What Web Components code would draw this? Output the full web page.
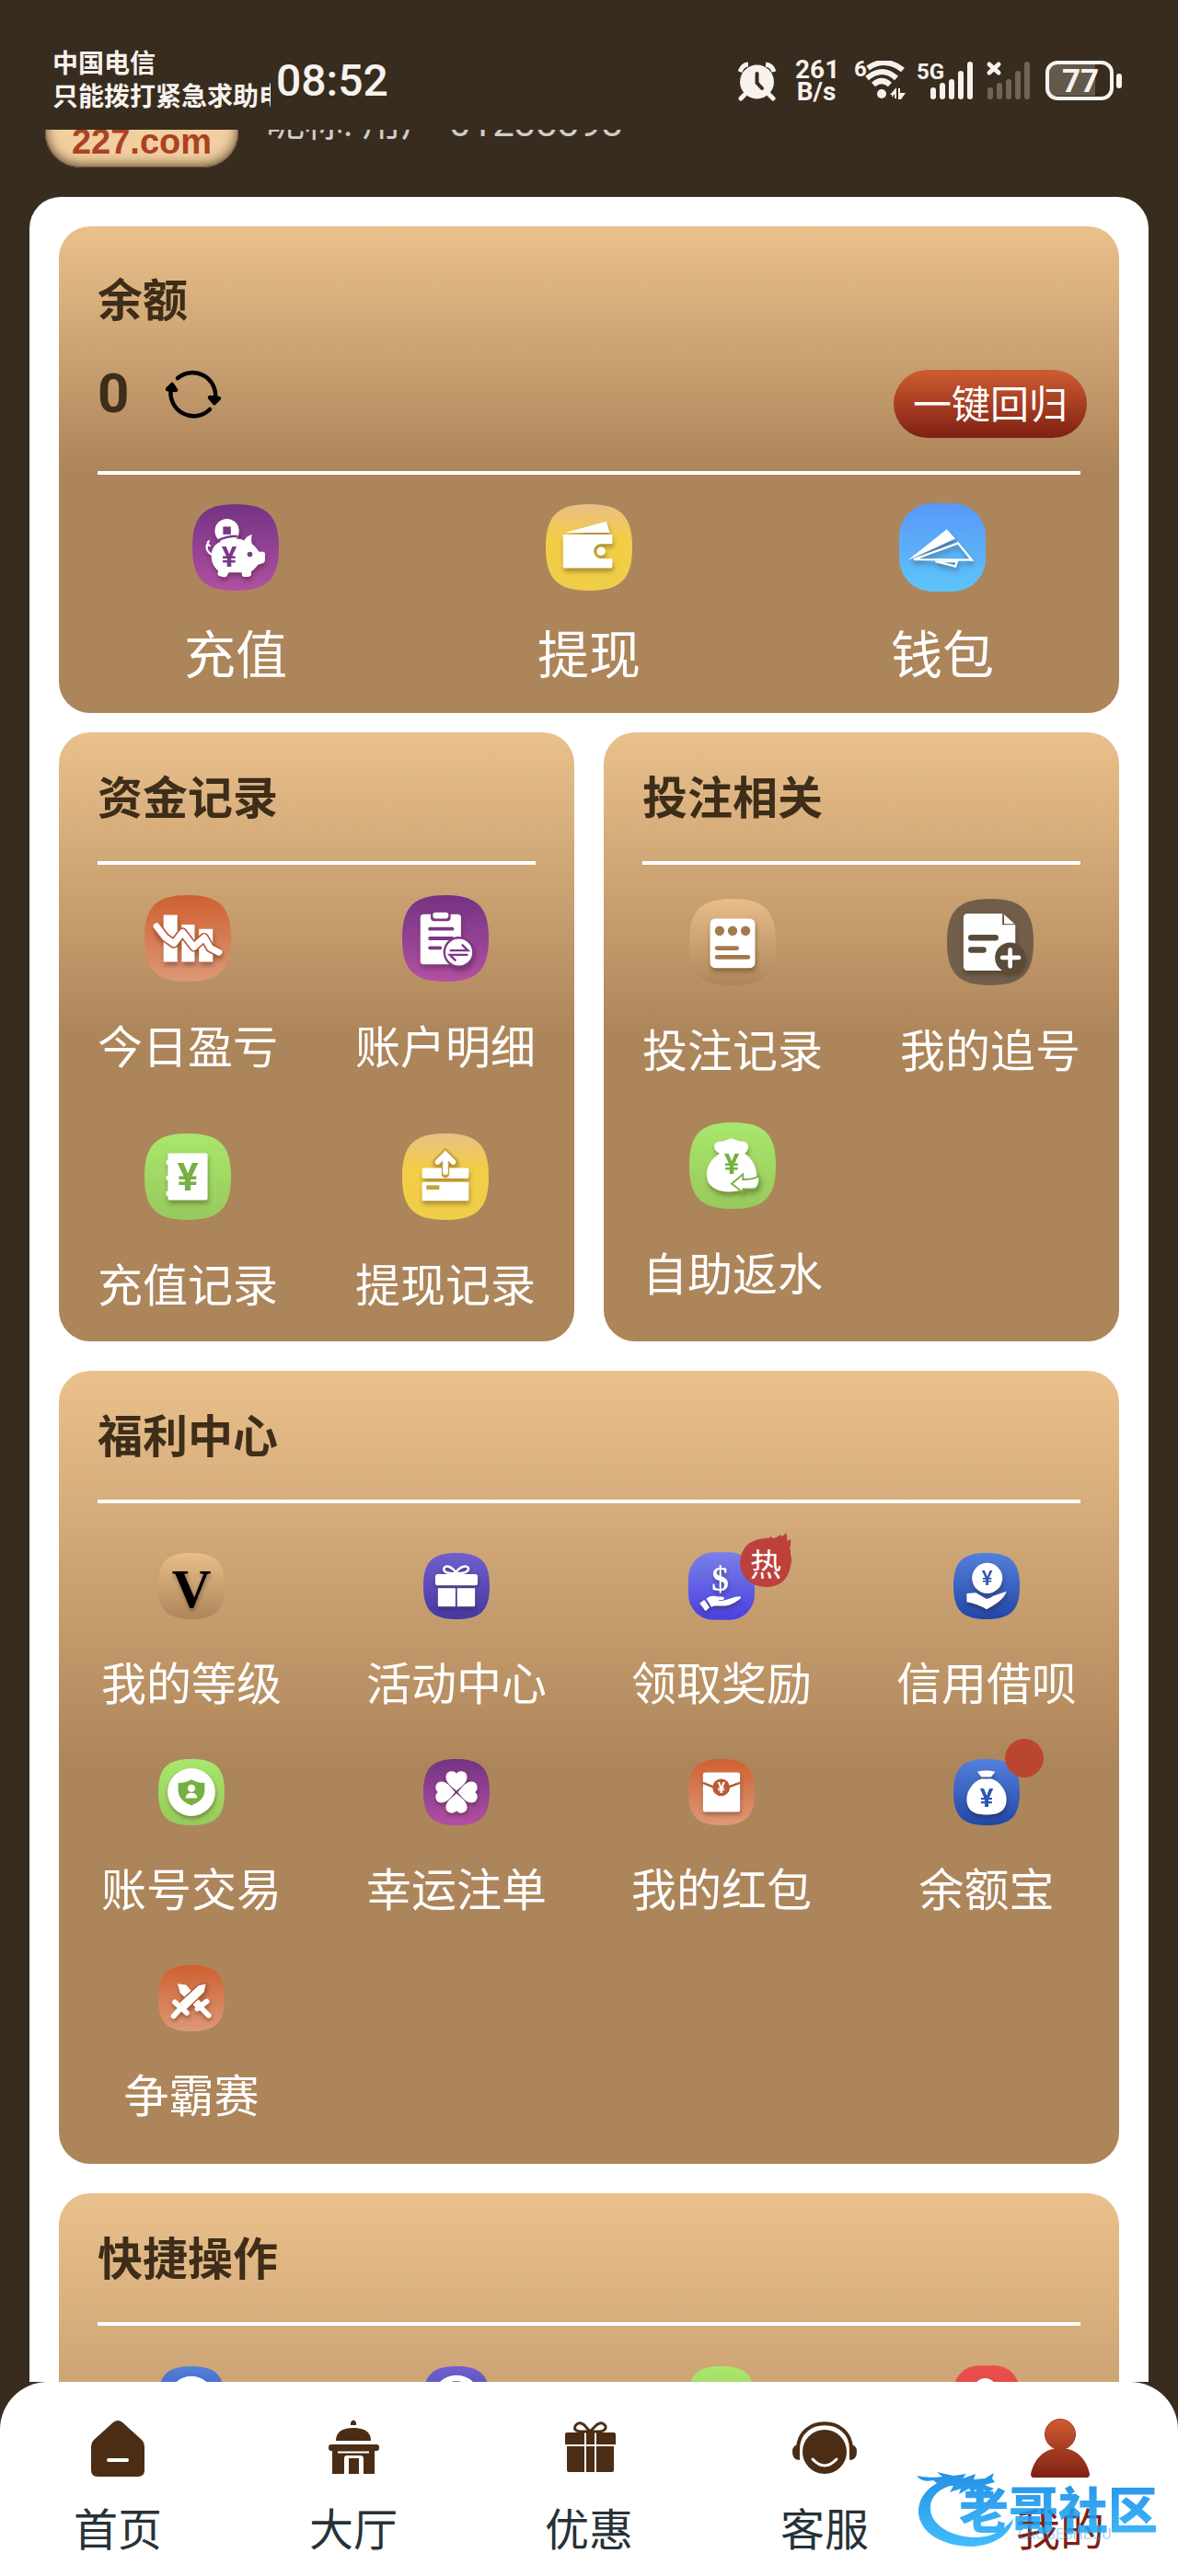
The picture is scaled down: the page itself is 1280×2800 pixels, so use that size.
<!DOCTYPE html>
<html lang="zh-CN">
<head>
<meta charset="utf-8">
<meta name="viewport" content="width=device-width, initial-scale=1">
<title>我的</title>
<style>
    body {
        margin: 0;
        background: #382c1e;
        font-family: Roboto, "Noto Sans CJK SC", sans-serif;
    }
</style>
</head>
<body>
<member-app></member-app>

<script>
// Glyphs are drawn on a 100x100 grid, var(--ink) is the colour of cut-outs
const glyphs = {
    piggy: `
        <circle cx="40" cy="31" r="14"/>
        <rect x="35.500" y="26" width="9" height="9" fill="var(--ink)"/>
        <path d="M20 48 Q16 46 19 43 M22 58 Q15 54 17 47" fill="none" stroke="#fff" stroke-width="2.500" stroke-linecap="round"/>
        <path d="M22 60 C22 46 34 40 50 40 C54 40 57 41 60 42 C62 38 65 36 69 35 C68 39 68 43 69 46 C73 49 75 52 77 55 L82 55 Q84 55 84 58 V65 Q84 67 82 68 L76 70 C74 73 71 76 68 78 V82 Q67 84 64 84 H60 Q57 84 57 79 H42 L40 83 Q39 85 35 84 L31 83 Q28 82 30 77 C25 73 22 67 22 60Z"/>
        <path d="M28 43 Q38 37 52 37" fill="none" stroke="var(--ink)" stroke-width="2.500"/>
        <circle cx="66.500" cy="58" r="3" fill="var(--ink)"/>
        <text x="42.500" y="72" font-size="33" fill="var(--ink)">¥</text>`,
    wallet: `
        <path d="M22 33 L70 20 L74 33Z"/>
        <path d="M20 35 H77 V46 H64 A8.500 8.500 0 0 0 64 63 H77 V72 Q77 74 75 74 H22 Q20 74 20 72Z"/>
        <circle cx="64" cy="54.500" r="5"/>`,
    plane: `
        <path d="M10 65 L55 29 L65 40Z"/>
        <path d="M17 64 L68 45 L84 64.500Z M42 66 L67 66 L65 72Z" fill="none" stroke="#fff" stroke-width="2.500"/>`,
    chart: `
        <path d="M22 23 H38 V77 H22Z M43 34 H58 V77 H43Z M63 39 H79 V77 H63Z"/>
        <path d="M14 36 L24 49 L34 56 L44 43 L57 60 L69 49 L76 61 L86 66" fill="none" stroke="var(--ink)" stroke-width="11" stroke-linejoin="round"/>
        <path d="M14 36 L24 49 L34 56 L44 43 L57 60 L69 49 L76 61 L86 66" fill="none" stroke="#fff" stroke-width="7.500" stroke-linejoin="round" stroke-linecap="round"/>`,
    clipboard: `
        <rect x="21" y="22" width="47" height="58" rx="4"/>
        <rect x="33" y="17" width="23" height="13" rx="4" fill="var(--ink)"/>
        <rect x="35.500" y="20" width="18" height="7" rx="3"/>
        <path d="M32 39 H58 M32 50 H58 M32 61 H44" stroke="var(--ink)" stroke-width="4" stroke-linecap="round"/>
        <circle cx="65.500" cy="66" r="18" fill="var(--ink)"/>
        <circle cx="65.500" cy="66" r="15.500"/>
        <path d="M55 64 H76 L69 57 M76 69 H55 L62 76" fill="none" stroke="var(--ink)" stroke-width="2.500"/>`,
    ledger: `
        <path d="M29 23 H71 Q73 23 73 25 V75 Q73 77 71 77 H29 Q27 77 27 75 V72 H25 V67 H27 V54 H25 V49 H27 V36 H25 V31 H27 V25 Q27 23 29 23Z"/>
        <text x="50" y="66" font-size="46" fill="var(--ink)">¥</text>`,
    cardUp: `
        <rect x="23" y="40" width="54" height="12" rx="2"/>
        <rect x="23" y="56" width="54" height="22" rx="2"/>
        <path d="M28 60 H43 V65 H28Z" fill="var(--ink)"/>
        <path d="M50 47 V27 M40 33 L50 23 L60 33" fill="none" stroke="var(--ink)" stroke-width="9" stroke-linecap="round"/>
        <path d="M50 45 V27 M41 33 L50 24 L59 33" fill="none" stroke="#fff" stroke-width="6" stroke-linecap="round"/>`,
    notepad: `
        <rect x="24" y="23" width="52" height="57" rx="6"/>
        <g fill="var(--ink)"><circle cx="35" cy="37" r="5.500"/><circle cx="50" cy="37" r="5.500"/><circle cx="65" cy="37" r="5.500"/></g>
        <path d="M32 57 H55 M32 67.500 H68" stroke="var(--ink)" stroke-width="5" stroke-linecap="round"/>`,
    docPlus: `
        <path d="M24 17 H64 V30 H79 V83 H24 Q19 83 19 78 V22 Q19 17 24 17Z"/>
        <path d="M66 18 L78 29 H66Z"/>
        <path d="M28 45 H56 M28 59 H42" stroke="var(--ink)" stroke-width="7" stroke-linecap="round"/>
        <circle cx="73" cy="68" r="17.500" fill="var(--ink)"/>
        <path d="M73 59 V78 M64 68 H83" stroke="#fff" stroke-width="5" stroke-linecap="round"/>`,
    bagReturn: `
        <path d="M35 36 C26 32 27 22 36 22 C40 22 41 21 44 20 Q49 17 53 20 Q57 22 62 22 C70 23 70 32 64 36 C74 43 78 52 78 63 L62 78 C46 83 20 81 20 60 C20 50 27 41 35 36Z"/>
        <text x="49" y="60" font-size="33" fill="var(--ink)">¥</text>
        <path d="M49 71 L62 60 V66 C70 66 76 65 81 62 C82 72 78 77 74 77 H62 V81Z" stroke="var(--ink)" stroke-width="2"/>`,
    level: `<text x="50" y="82" font-size="82" fill="#000" font-family="Liberation Serif, serif">V</text>`,
    gift: `
        <path d="M48 31 C34 31 30 28 31 23 C34 17 44 21 49 30 C54 21 66 17 68 23 C69 28 62 31 50 31" fill="none" stroke="#fff" stroke-width="3.500"/>
        <rect x="18" y="32" width="64" height="17" rx="4"/>
        <path d="M22 53 H48.500 V81 H24 Q22 81 22 79Z M51 53 H78 V79 Q78 81 76 81 H51Z"/>`,
    shield: `
        <circle cx="50" cy="50" r="36"/>
        <path d="M50 31 Q58 36 70 36 V48 Q69 63 50 70 Q31 63 30 48 V36 Q42 36 50 31Z" fill="var(--ink)"/>
        <circle cx="50" cy="44" r="5.500"/>
        <path d="M41 59 Q42 51 50 51 Q58 51 59 59Z"/>`,
    clover: [0, 90, 180, 270].map(a => `
        <path transform="rotate(${a} 50 50)" d="M50 48 C42 41 34 36 34 27 C34 18 46 16 50 22 C54 16 66 18 66 27 C66 36 58 41 50 48Z"/>`).join(''),
    swords: `
        <path d="M29 28 L42 30 L68 60 L60 67 L33 42Z"/>
        <path d="M59 66 L73 55 M66 66 L76 76" stroke="#fff" stroke-width="8" stroke-linecap="round"/>
        <path d="M73 27 L70 41 L42 68 L31 57 L60 30Z" stroke="var(--ink)" stroke-width="2"/>
        <path d="M25 56 L43 72 M33 66 L23 77" stroke="#fff" stroke-width="8" stroke-linecap="round"/>`,
    reward: `
        <text x="48" y="57" font-size="52" font-weight="700" font-family="Liberation Serif, serif">$</text>
        <path d="M17 76 L24 71 L32 82 L26 88Z"/>
        <path d="M27 69 C36 62 40 66 50 66 C56 66 55 71 50 71 L44 72 C56 74 66 66 74 66 C80 64 81 68 76 71 C66 78 60 80 52 80 C44 80 38 79 35 82Z"/>`,
    credit: `
        <circle cx="51" cy="38" r="23"/>
        <text x="51" y="49" font-size="31" font-weight="500" fill="var(--ink)">¥</text>
        <path d="M20 61 L34 60 L49 69 Q54 70 60 65 L80 58 Q76 72 50 85 Q36 77 20 74Z"/>`,
    envelope: `
        <rect x="22" y="20" width="56" height="60" rx="4"/>
        <path d="M22 36 L37 42 H61 L78 36" fill="none" stroke="var(--ink)" stroke-width="3.500"/>
        <circle cx="49.500" cy="43" r="13" fill="var(--ink)"/>
        <text x="49.500" y="51" font-size="22">¥</text>`,
    moneyBag: `
        <path d="M36 19 Q50 16 63 19 L57 27 H42Z"/>
        <path d="M42 30 H58 C70 34 80 48 80 60 C80 78 69 84 50 84 C31 84 20 78 20 60 C20 48 30 34 42 30Z"/>
        <text x="50" y="72" font-size="38" fill="var(--ink)">¥</text>`,
    disc: `<circle cx="50" cy="50" r="35"/>`,
    ring: `<circle cx="50" cy="50" r="32" fill="none" stroke="#fff" stroke-width="9"/>`,
    none: '',
    person: `<circle cx="48" cy="35" r="17"/><path d="M20 84 Q24 56 50 56 Q76 56 80 84Z"/>`
}

// Tile colours: [top, bottom, ink, optional middle]
const tones = {
    purple: ['#743383', '#b250a2', '#7e3787'],
    gold: ['#e9bf86', '#efce49', '#c5a237', '#f3cd46'],
    sky: ['#5a97f8', '#5cc5fa', '#55a6f5'],
    orange: ['#cf6030', '#dc9977', '#b85a36'],
    green: ['#a9e76c', '#97c95c', '#76b043'],
    sand: ['#e8bd88', '#ae865b', '#a37a4f'],
    grey: ['#705e48', '#705f4c', '#5a4a38'],
    indigo: ['#6f60cf', '#4737a0', '#4d3dab'],
    violet: ['#7a80e8', '#4a3fe0', '#554be0'],
    blue: ['#557fdc', '#2147a6', '#2c55b4'],
    red: ['#ea4f4d', '#d93c3c', '#c83434']
}

const navIcons = {
    home: `<path fill="#4a2d14" d="M27 4 Q32 0 37 4 L58 23 Q61 26 61 30 V56 Q61 63 54 63 H10 Q3 63 3 56 V30 Q3 26 6 23Z"/>
        <path d="M22 45 H42" stroke="#fff" stroke-width="4" stroke-linecap="round"/>`,
    hall: `<g fill="#4a2d14"><path d="M29 7 V4 Q32 -1 35 4 V7Z"/>
        <path d="M13 24 Q13 10 32 10 Q51 10 51 24Z"/>
        <rect x="5" y="28" width="55" height="7" rx="3"/>
        <path d="M9 34 H55 V60 H43 V43 Q43 40 39 40 H25 Q22 40 22 43 V60 H9Z M27 43 H38 V60 H27Z"/></g>
        <path d="M15 36.500 H49" stroke="#fff" stroke-width="2"/>`,
    gift: `<g fill="#4a2d14"><path d="M6 17 Q6 15 8 15 H27 V28 H6Z M29 15 H38 V28 H29Z M40 15 H59 Q61 15 61 17 V28 H40Z"/>
        <path d="M8 30 H27 V58 H10 Q8 58 8 56Z M29 30 H38 V58 H29Z M40 30 H59 V56 Q59 58 57 58 H40Z"/></g>
        <path d="M30 14 H22 Q15 13 17 8 Q21 2 27 7 L33 14 L40 7 Q46 2 50 8 Q51 13 44 14Z" fill="none" stroke="#4a2d14" stroke-width="3"/>`,
    service: `<path d="M3 33 C3 -4 61 -4 61 33" fill="none" stroke="#4a2d14" stroke-width="4"/>
        <g fill="#4a2d14"><path d="M5 28 V45 Q-3 45 -3 36 Q-3 28 5 28Z M59 28 V45 Q67 45 67 36 Q67 28 59 28Z"/><ellipse cx="32" cy="36" rx="24" ry="24"/></g>
        <path d="M19 44 Q32 58 45 44" fill="none" stroke="#fff" stroke-width="3" stroke-linecap="round"/>`,
    user: `<defs><linearGradient id="u" x1="0" y1="0" x2="0" y2="64" gradientUnits="userSpaceOnUse"><stop stop-color="#cf5c31"/><stop offset="1" stop-color="#7f2014"/></linearGradient></defs>
        <g fill="url(#u)"><path d="M3 64 Q0 64 0 60 C4 42 16 32 32 32 C48 32 60 42 64 60 Q64 64 61 64Z"/>
        <circle cx="32" cy="17" r="16.500" stroke="#a33b22" stroke-width="1"/></g>`
}

class StatusBar extends HTMLElement {
    constructor() {
        super()
        this.attachShadow({ mode: 'open' })

        const template = document.createElement('template')
        template.innerHTML = `
            <style>
                :host {
                    display: flex;
                    align-items: center;
                    box-sizing: border-box;
                    height: 141px;
                    padding: 34px 61px 0 57px;
                    color: #f7f2ee;
                }
                .carrier {
                    width: 237px;
                    overflow: hidden;
                    white-space: nowrap;
                    font-size: 28px;
                    line-height: 36px;
                    font-weight: 700;
                }
                time {
                    flex: 1;
                    margin-left: 6px;
                    font-size: 48px;
                    line-height: 48px;
                    font-weight: 500;
                }
                .icons {
                    display: flex;
                    align-items: center;
                    gap: 12px;
                }
                .speed {
                    width: 46px;
                    font-size: 28px;
                    line-height: 24px;
                    font-weight: 700;
                    text-align: center;
                }
                svg {
                    display: block;
                    fill: currentColor;
                    font-weight: 700;
                }
            </style>
            <div class="carrier">
                <div>中国电信</div>
                <div>只能拨打紧急求助电话</div>
            </div>
            <time>08:52</time>
            <div class="icons">
                <svg width="50" height="44" viewBox="0 0 50 44">
                    <circle cx="20.500" cy="23" r="18.500"/>
                    <path d="M7 37 L3 41 M34 37 L38 41" stroke="currentColor" stroke-width="5" stroke-linecap="round"/>
                    <path d="M2 12 Q5 4 11 4 M30 4 Q37 5 39 12" fill="none" stroke="currentColor" stroke-width="5"/>
                    <path d="M20.500 14 V24 L26 30" fill="none" stroke="#382c1e" stroke-width="4" stroke-linecap="round"/>
                </svg>
                <div class="speed"><div>261</div><div>B/s</div></div>
                <svg width="62" height="44" viewBox="0 0 62 44">
                    <text x="6" y="17" font-size="24">6</text>
                    <path d="M21 8 Q40 -5 59 10 M20 19 Q37 5 52 19 M27 26 Q36 18 45 26" fill="none" stroke="currentColor" stroke-width="6"/>
                    <circle cx="36" cy="36" r="5"/>
                    <path d="M47 40 V37 H45 L52 29 V41 H50 V36Z M54 30 H56 V35 H62 L57 42 H54Z"/>
                </svg>
                <svg width="62" height="44" viewBox="0 0 62 44">
                    <text x="0" y="20" font-size="24">5G</text>
                    <path d="M18 32 V39 M28 27 V39 M38 23 V39 M48 14 V39 M58 4 V39" stroke="currentColor" stroke-width="6" stroke-linecap="round"/>
                </svg>
                <svg width="54" height="44" viewBox="0 0 54 44">
                    <path d="M5 4 L15 13 M15 4 L5 13" stroke="currentColor" stroke-width="5" stroke-linecap="round"/>
                    <path d="M6 32 V39 M16 27 V39 M26 23 V39 M36 14 V39 M46 4 V39" stroke="#6f6556" stroke-width="6" stroke-linecap="round"/>
                </svg>
                <svg width="83" height="44" viewBox="0 0 83 44">
                    <path d="M8 4 H54 V38 H8 Q3 36 3 30 V10 Q3 5 8 4Z" fill="#63594a"/>
                    <rect x="2" y="2" width="70" height="39" rx="11" fill="none" stroke="currentColor" stroke-width="4"/>
                    <rect x="77" y="14" width="6" height="16" rx="3"/>
                    <text x="18" y="34" font-size="35">77</text>
                </svg>
            </div>
        `
        this.shadowRoot.appendChild(template.content.cloneNode(true))
    }
}

class ProfileHeader extends HTMLElement {
    constructor() {
        super()
        this.attachShadow({ mode: 'open' })

        const template = document.createElement('template')
        template.innerHTML = `
            <style>
                :host {
                    display: flex;
                    gap: 30px;
                    padding: 0 49px 32px;
                }
                .badge {
                    display: flex;
                    align-items: flex-end;
                    justify-content: center;
                    box-sizing: border-box;
                    width: 210px;
                    height: 112px;
                    padding-bottom: 7px;
                    border-radius: 38px;
                    background: #f2cfa0;
                    box-shadow: inset 0 -2px 14px #54422c, inset 0 0 0 1px #8a7355;
                    color: #ab4224;
                    font: 900 38px/42px Impact, "Liberation Sans", sans-serif;
                }
                .name {
                    margin-top: 34px;
                    color: #cfccc8;
                    font-size: 42px;
                    line-height: 60px;
                }
            </style>
            <div class="badge"><slot name="badge"></slot></div>
            <div class="name"><slot></slot></div>
        `
        this.shadowRoot.appendChild(template.content.cloneNode(true))
    }
}

class MenuCard extends HTMLElement {
    constructor() {
        super()
        this.attachShadow({ mode: 'open' })

        const template = document.createElement('template')
        template.innerHTML = `
            <style>
                :host {
                    display: block;
                    border-radius: 34px;
                    background: linear-gradient(#eac18c, #ad855a 50%);
                }
                header {
                    margin: 0 42px;
                    padding: var(--header-padding, 37px 0 31px);
                    border-bottom: 4px solid #fff;
                }
                h2 {
                    margin: 0;
                    color: #3d2d19;
                    font-size: 49px;
                    line-height: 72px;
                    font-weight: 700;
                }
                .grid {
                    display: grid;
                    grid-template-columns: repeat(var(--columns, 4), 1fr);
                    row-gap: var(--row-gap, 44px);
                    padding: var(--grid-padding, 54px 0 36px);
                }
            </style>
            <header>
                <h2></h2>
                <slot name="extra"></slot>
            </header>
            <div class="grid"><slot></slot></div>
        `
        this.shadowRoot.appendChild(template.content.cloneNode(true))
        this.shadowRoot.querySelector('h2').textContent = this.getAttribute('heading')
    }
}

class BalanceRow extends HTMLElement {
    constructor() {
        super()
        this.attachShadow({ mode: 'open' })

        const template = document.createElement('template')
        template.innerHTML = `
            <style>
                :host {
                    display: flex;
                    align-items: flex-start;
                    height: 78px;
                    margin: 34px -7px 0 0;
                    color: #3d2d19;
                }
                output {
                    margin-right: 40px;
                    font-size: 60px;
                    line-height: 60px;
                    font-weight: 700;
                }
                button {
                    border: 0;
                    padding: 0;
                    background: none;
                    font-family: inherit;
                }
                .refresh svg {
                    display: block;
                }
                .collect {
                    align-self: flex-end;
                    box-sizing: border-box;
                    margin-left: auto;
                    width: 210px;
                    height: 74px;
                    padding-top: 4px;
                    border-radius: 37px;
                    background: linear-gradient(#cf5c31, #7f2014);
                    color: #fff;
                    font-size: 42px;
                    line-height: 70px;
                }
            </style>
            <output>0</output>
            <button class="refresh" type="button" aria-label="刷新">
                <svg width="60" height="60" viewBox="0 -2 60 60" fill="none" stroke="#000" stroke-width="4.500" stroke-linecap="round">
                    <path d="M13 11 A25 25 0 0 1 54 33"/>
                    <path d="M48 45 A25 25 0 0 1 6 22"/>
                    <path d="M48 32 L53 38 L58 33Z M2 23 L7 18 L11 24Z" fill="#000" stroke-linejoin="round"/>
                </svg>
            </button>
            <button class="collect" type="button">一键回归</button>
        `
        this.shadowRoot.appendChild(template.content.cloneNode(true))
    }
}

class MenuItem extends HTMLElement {
    constructor() {
        super()
        this.attachShadow({ mode: 'open' })

        const [top, bottom, ink, middle] = tones[this.getAttribute('tone')]
        const shape = this.hasAttribute('round')
            ? '<rect y="-1" width="100" height="102" rx="38" fill="url(#t)"/>'
            : '<path d="M50 0 C87 0 100 14 100 50 S87 100 50 100 S0 86 0 50 S13 0 50 0Z" fill="url(#t)"/>'

        const template = document.createElement('template')
        template.innerHTML = `
            <style>
                :host {
                    display: block;
                }
                a {
                    display: flex;
                    flex-direction: column;
                    align-items: center;
                    gap: var(--label-gap, 36px);
                    color: #fff;
                    font-size: var(--label-size, 49px);
                    line-height: var(--label-line, 72px);
                    text-decoration: none;
                    white-space: nowrap;
                }
                .icon {
                    position: relative;
                    width: var(--icon-size, 72px);
                    height: var(--icon-size, 72px);
                }
                svg {
                    display: block;
                    width: 100%;
                    height: 100%;
                    overflow: visible;
                }
                .glyph {
                    --ink: ${ink};
                    fill: #fff;
                    font-weight: 700;
                    text-anchor: middle;
                    filter: drop-shadow(1px 4px 3px rgba(40, 20, 0, .35));
                }
            </style>
            <a href="#">
                <span class="icon">
                    <svg viewBox="0 0 100 100" aria-hidden="true">
                        <defs>
                            <linearGradient id="t" x1="0" y1="0" x2="0" y2="1">
                                <stop stop-color="${top}"/>
                                ${middle ? `<stop offset=".4" stop-color="${middle}"/>` : ''}
                                <stop offset="1" stop-color="${bottom}"/>
                            </linearGradient>
                        </defs>
                        ${shape}
                        <g class="glyph">${glyphs[this.getAttribute('icon')]}</g>
                    </svg>
                    <slot name="badge"></slot>
                </span>
                <slot></slot>
            </a>
        `
        this.shadowRoot.appendChild(template.content.cloneNode(true))
    }
}

class HotBadge extends HTMLElement {
    constructor() {
        super()
        this.attachShadow({ mode: 'open' })

        const template = document.createElement('template')
        template.innerHTML = `
            <style>
                :host {
                    position: absolute;
                    left: 56px;
                    top: -22px;
                    width: 56px;
                    height: 60px;
                }
                :host([dot]) {
                    width: 42px;
                    height: 42px;
                    border-radius: 50%;
                    background: #bb4630;
                }
                :host([dot]) svg {
                    display: none;
                }
                svg {
                    display: block;
                }
            </style>
            <svg width="56" height="60" viewBox="0 0 56 60">
                <path d="M28 6 Q32 6 34 4 L35 6 Q40 6 44 2 L45 4 Q48 3 50 0 Q52 5 51 9 L55 7 Q56 12 54 17 L55 19 V24 Q57 29 55 36 Q51 59 28 59 Q2 57 0 33 Q1 8 28 6Z" fill="#bd403c"/>
                <text x="28" y="47" font-size="34" text-anchor="middle" fill="#fff">热</text>
            </svg>
        `
        this.shadowRoot.appendChild(template.content.cloneNode(true))
    }
}

class NavItem extends HTMLElement {
    constructor() {
        super()
        this.attachShadow({ mode: 'open' })

        const template = document.createElement('template')
        template.innerHTML = `
            <style>
                :host {
                    display: block;
                    flex: 1;
                }
                a {
                    display: flex;
                    flex-direction: column;
                    align-items: center;
                    gap: 26px;
                    color: #263238;
                    font-size: 48px;
                    line-height: 64px;
                    text-decoration: none;
                }
                :host([active]) a {
                    color: #7f2014;
                }
                svg {
                    display: block;
                    overflow: visible;
                }
            </style>
            <a href="#">
                <svg width="64" height="64" viewBox="0 0 64 64" aria-hidden="true">${navIcons[this.getAttribute('icon')]}</svg>
                <span><slot></slot></span>
            </a>
        `
        this.shadowRoot.appendChild(template.content.cloneNode(true))
    }
}

class CommunityMark extends HTMLElement {
    constructor() {
        super()
        this.attachShadow({ mode: 'open' })

        const template = document.createElement('template')
        template.innerHTML = `
            <style>
                :host {
                    position: absolute;
                    right: 0;
                    bottom: 0;
                    opacity: .88;
                    pointer-events: none;
                }
                svg {
                    display: block;
                }
            </style>
            <svg width="300" height="190" viewBox="0 0 300 190">
                <defs>
                    <linearGradient id="m" x1="0" y1="80" x2="0" y2="158" gradientUnits="userSpaceOnUse">
                        <stop stop-color="#0a84e4"/>
                        <stop offset="1" stop-color="#28b4fb"/>
                    </linearGradient>
                </defs>
                <g fill="url(#m)">
                    <path d="M56 83 C30 88 17 104 18 122 C21 146 48 158 76 158 C100 157 118 145 121 128 C108 144 92 149 76 148 C50 146 32 133 31 118 C30 104 40 94 60 90Z"/>
                    <path d="M16 81 Q28 84 44 82 L38 77 L56 81 L70 79 L66 84 L80 79 L78 85 L90 84 L100 78 L98 84 L101 88 L90 91 L100 95 L94 99 L82 94 L76 100 L73 95 L62 101 L64 95 L52 99 L56 92 L42 92 L34 86 Q22 89 16 81Z"/>
                    <text x="62" y="139" font-size="54" font-weight="900">老哥社区</text>
                </g>
                <text x="126" y="150" font-size="16" fill="#28a4f0" opacity=".5">LAOGESHEQU</text>
            </svg>
        `
        this.shadowRoot.appendChild(template.content.cloneNode(true))
    }
}

class MemberApp extends HTMLElement {
    constructor() {
        super()
        this.attachShadow({ mode: 'open' })

        // region Template
        const template = document.createElement('template')
        template.innerHTML = `
            <style>
                :host {
                    display: flex;
                    flex-direction: column;
                    height: 100vh;
                }
                main {
                    flex: 1;
                    min-height: 0;
                    overflow: hidden;
                }
                /* the page is scrolled down, half of the header is gone */
                profile-header {
                    margin-top: -71px;
                }
                .panel {
                    margin: 0 32px;
                    padding: 32px;
                    border-radius: 34px 34px 0 0;
                    background: #fff;
                }
                .pair {
                    display: grid;
                    grid-template-columns: 1fr 1fr;
                    gap: 32px;
                    margin: 21px 0 32px;
                }
                .balance {
                    --columns: 3;
                    --header-padding: 46px 0 36px;
                    --grid-padding: 32px 0 22px;
                    --icon-size: 94px;
                    --label-gap: 31px;
                    --label-size: 56px;
                    --label-line: 80px;
                }
                .funds, .bets {
                    --columns: 2;
                    --icon-size: 94px;
                    --label-gap: 37px;
                }
                .funds {
                    --row-gap: 56px;
                    --grid-padding: 33px 0 23px;
                }
                .bets {
                    --row-gap: 40px;
                    --grid-padding: 37px 0 23px;
                }
                .quick {
                    --grid-padding: 44px 0 36px;
                    min-height: 862px;
                    margin-top: 32px;
                }
                nav {
                    position: relative;
                    display: flex;
                    padding: 40px 0 17px;
                    border-radius: 52px 52px 0 0;
                    background: #fff;
                }
            </style>

            <status-bar></status-bar>
            <main>
                <profile-header><span slot="badge">227.com</span>昵称: 用户 01233398</profile-header>
                <div class="panel">
                    <menu-card class="balance" heading="余额">
                        <balance-row slot="extra"></balance-row>
                        <menu-item icon="piggy" tone="purple">充值</menu-item>
                        <menu-item icon="wallet" tone="gold">提现</menu-item>
                        <menu-item icon="plane" tone="sky" round>钱包</menu-item>
                    </menu-card>

                    <div class="pair">
                        <menu-card class="funds" heading="资金记录">
                            <menu-item icon="chart" tone="orange">今日盈亏</menu-item>
                            <menu-item icon="clipboard" tone="purple">账户明细</menu-item>
                            <menu-item icon="ledger" tone="green">充值记录</menu-item>
                            <menu-item icon="cardUp" tone="gold">提现记录</menu-item>
                        </menu-card>
                        <menu-card class="bets" heading="投注相关">
                            <menu-item icon="notepad" tone="sand">投注记录</menu-item>
                            <menu-item icon="docPlus" tone="grey">我的追号</menu-item>
                            <menu-item icon="bagReturn" tone="green">自助返水</menu-item>
                        </menu-card>
                    </div>

                    <menu-card heading="福利中心">
                        <menu-item icon="level" tone="sand">我的等级</menu-item>
                        <menu-item icon="gift" tone="indigo">活动中心</menu-item>
                        <menu-item icon="reward" tone="violet" round><hot-badge slot="badge"></hot-badge>领取奖励</menu-item>
                        <menu-item icon="credit" tone="blue">信用借呗</menu-item>
                        <menu-item icon="shield" tone="green">账号交易</menu-item>
                        <menu-item icon="clover" tone="purple">幸运注单</menu-item>
                        <menu-item icon="envelope" tone="orange">我的红包</menu-item>
                        <menu-item icon="moneyBag" tone="blue"><hot-badge slot="badge" dot></hot-badge>余额宝</menu-item>
                        <menu-item icon="swords" tone="orange">争霸赛</menu-item>
                    </menu-card>

                    <menu-card class="quick" heading="快捷操作">
                        <menu-item icon="disc" tone="blue"></menu-item>
                        <menu-item icon="ring" tone="indigo"></menu-item>
                        <menu-item icon="none" tone="green"></menu-item>
                        <menu-item icon="person" tone="red" round></menu-item>
                    </menu-card>
                </div>
            </main>
            <nav>
                <nav-item icon="home">首页</nav-item>
                <nav-item icon="hall">大厅</nav-item>
                <nav-item icon="gift">优惠</nav-item>
                <nav-item icon="service">客服</nav-item>
                <nav-item icon="user" active>我的</nav-item>
                <community-mark></community-mark>
            </nav>
        `
        this.shadowRoot.appendChild(template.content.cloneNode(true))
        // endregion
    }
}

customElements.define('status-bar', StatusBar)
customElements.define('profile-header', ProfileHeader)
customElements.define('balance-row', BalanceRow)
customElements.define('hot-badge', HotBadge)
customElements.define('menu-item', MenuItem)
customElements.define('menu-card', MenuCard)
customElements.define('nav-item', NavItem)
customElements.define('community-mark', CommunityMark)
customElements.define('member-app', MemberApp)
</script>
</body>
</html>
